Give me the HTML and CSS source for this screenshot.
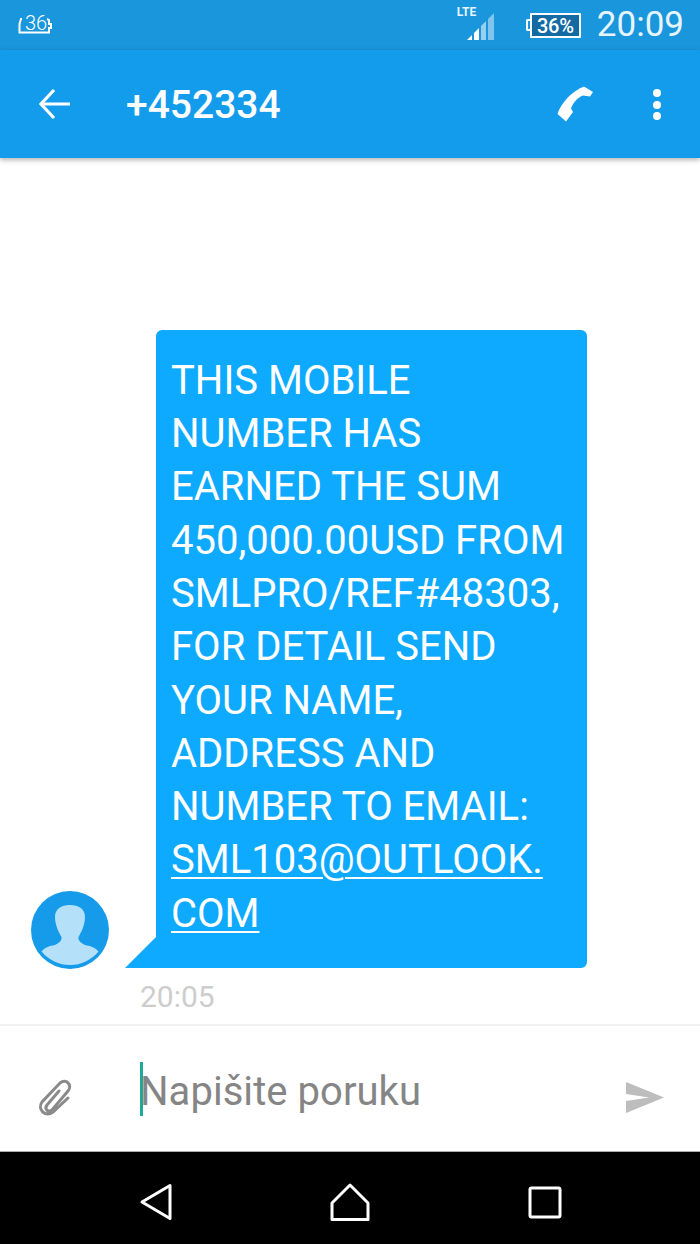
FILE: index.html
```html
<!DOCTYPE html>
<html lang="hr">
<head>
<meta charset="utf-8">
<title>+452334</title>
<link rel="stylesheet" href="styles.css">
</head>
<body>
<div class="status">
  <div class="status-left">
    <svg class="ic-sd" width="36" height="24" viewBox="0 0 36 24"><path d="M5 6H4L2.500 11V19.500H32V15H34V11H32V7L30 6" fill="none" stroke="#fff" stroke-width="2"/></svg>
    <span class="sd-num">36</span>
  </div>
  <div class="status-right">
    <div class="signal">
      <span class="lte">LTE</span>
      <svg width="30" height="30" viewBox="0 0 30 30"><path d="M1 29L6 24V29Z" fill="#fff"/><path d="M8 29V22L13 17V29Z" fill="#fff"/><path d="M15 29V15L20 10V29Z" fill="#fff" fill-opacity=".55"/><path d="M22 29V8L28 2V29Z" fill="#fff" fill-opacity=".45"/></svg>
    </div>
    <div class="batt"><span class="batt-cap"></span><span class="batt-body">36%</span></div>
    <span class="clock">20:09</span>
  </div>
</div>
<header class="appbar">
  <svg class="back" width="34" height="32" viewBox="0 0 34 32"><path d="M32 16H3M16 2L3 16L16 30" fill="none" stroke="#fff" stroke-width="3.2"/></svg>
  <h1 class="title">+452334</h1>
  <svg class="call" width="37" height="36" viewBox="0 0 37 36"><path d="M27 .5L36 6 33 10.500 26 9.500C21 11 16 17 14 22.500L16 26 9 35.500 .5 28C4 17 15 5 27 .5Z" fill="#fff"/></svg>
  <div class="more"><i></i><i></i><i></i></div>
</header>
<main class="chat">
  <div class="msg">
    <svg class="avatar" width="78" height="78" viewBox="0 0 78 78"><circle cx="39" cy="39" r="39" fill="#159bea"/><path d="M24 26C24 18 30 14 39 14 48 14 54 18 54 26 54 33 51 40 47.500 46 47 50 50 52 54 54 59 55 64 56 67.500 60.500A37 37 0 0 1 10.500 60.500C14 56 19 55 24 54 28 52 31 50 30.500 46 27 40 24 33 24 26Z" fill="#b5e0f9"/></svg>
    <div class="bubble">THIS MOBILE NUMBER HAS EARNED THE SUM 450,000.00USD FROM SMLPRO/REF#48303, FOR DETAIL SEND YOUR NAME, ADDRESS AND NUMBER TO EMAIL: <a class="link">SML103@OUTLOOK.<br>COM</a></div>
  </div>
  <time class="stamp">20:05</time>
</main>
<div class="composer">
  <svg class="clip" width="36" height="38" viewBox="0 0 36 38"><path d="M22 13L10 27C7 31 11 35 15 32L31 13C36 7 29 0 23 5L5 24C0 31 8 40 16 34L31 20" fill="none" stroke="#8a8a8a" stroke-width="3" stroke-linecap="round"/></svg>
  <div class="input"><span class="caret"></span><span class="placeholder">Napišite poruku</span></div>
  <svg class="send" width="40" height="32" viewBox="0 0 40 32"><path d="M1 1L39 16.500 1 32V20L24 16.500 1 13Z" fill="#bdbdbd"/></svg>
</div>
<nav class="navbar">
  <svg width="34" height="38" viewBox="0 0 34 38"><path d="M31 2.500V35.500L3 19Z" fill="none" stroke="#fff" stroke-width="3" stroke-linejoin="round"/></svg>
  <svg class="home" width="40" height="38" viewBox="0 0 40 38"><path d="M2 36.500V20L20 2 38 20V36.500Z" fill="none" stroke="#fff" stroke-width="3" stroke-linejoin="round"/></svg>
  <svg width="34" height="33" viewBox="0 0 34 33"><rect x="2" y="2" width="30" height="29" rx="1.500" fill="none" stroke="#fff" stroke-width="3"/></svg>
</nav>
</body>
</html>
```

FILE: styles.css
```css
* { box-sizing: border-box; }
html, body { margin: 0; padding: 0; }
body {
  width: 700px;
  height: 1244px;
  display: flex;
  flex-direction: column;
  overflow: hidden;
  background: #fff;
  font-family: Roboto, "Liberation Sans", sans-serif;
}
svg { display: block; flex: none; }

.status {
  height: 50px;
  flex: none;
  background: #1a96dc;
  display: flex;
  justify-content: space-between;
  align-items: center;
  color: #fff;
}
.status-left { position: relative; margin-left: 17px; }
.sd-num {
  position: absolute;
  left: 8px;
  top: 0;
  font-size: 20px;
  line-height: 20px;
  font-weight: 300;
}
.status-right { display: flex; align-items: center; margin-right: 16px; }
.signal { position: relative; width: 30px; height: 32px; margin-right: 30px; margin-top: 1px; }
.signal svg { position: absolute; right: 0; bottom: 1px; }
.lte {
  position: absolute;
  left: -9px;
  top: -4px;
  font-size: 12px;
  line-height: 12px;
  font-weight: 700;
  color: #e8f5fd;
}
.batt { display: flex; align-items: center; margin-right: 16px; }
.batt-cap { width: 4px; height: 12px; border: 2px solid #fff; border-right: 0; border-radius: 2px 0 0 2px; }
.batt-body {
  width: 51px;
  height: 25px;
  background: #146ba4;
  border: 2px solid #fff;
  border-radius: 1px;
  font-size: 20px;
  line-height: 22px;
  font-weight: 500;
  text-align: center;
  letter-spacing: -0.3px;
}
.clock { font-size: 35px; line-height: 40px; color: #e6f4fc; }

.appbar {
  height: 108px;
  flex: none;
  background: #149cec;
  display: flex;
  align-items: center;
  padding-left: 38px;
  box-shadow: 0 2px 5px rgba(0, 0, 0, .3);
  position: relative;
  color: #fff;
}
.title { margin: 2px 0 0 54px; font-size: 39px; line-height: 44px; font-weight: 500; flex: 1; }
.call { margin-right: 59px; margin-top: -1px; }
.more { display: flex; flex-direction: column; gap: 3.500px; width: 8px; margin-right: 39px; margin-top: 1px; }
.more i { width: 8px; height: 8px; border-radius: 50%; background: #fff; display: block; }

.chat {
  flex: 1;
  min-height: 0;
  display: flex;
  flex-direction: column;
  justify-content: flex-end;
  border-bottom: 2px solid #f2f2f2;
}
.msg { display: flex; align-items: flex-end; padding-left: 31px; }
.avatar { margin-bottom: -1px; }
.bubble {
  position: relative;
  width: 431px;
  margin-left: 47px;
  padding: 24px 15px 28px 15px;
  background: #0eaaff;
  color: #fff;
  border-radius: 6px 6px 6px 0;
  font-size: 40px;
  line-height: 53.3px;
}
.bubble::before {
  content: "";
  position: absolute;
  left: -31px;
  bottom: 0;
  border-style: solid;
  border-width: 0 0 31px 31px;
  border-color: transparent transparent #0eaaff transparent;
}
.link { color: #fff; text-decoration: underline; text-decoration-thickness: 2px; text-underline-offset: 4px; }
.stamp {
  display: block;
  margin: 12px 0 10px 140px;
  font-size: 30px;
  line-height: 34px;
  color: #cdcdcd;
}

.composer {
  height: 126px;
  flex: none;
  display: flex;
  align-items: center;
  padding-left: 37px;
  border-bottom: 1px solid #aaa;
}
.clip { margin-top: 17px; }
.input { flex: 1; display: flex; align-items: center; margin-left: 67px; position: relative; }
.caret { width: 3px; height: 54px; background: #1fa89b; flex: none; }
.placeholder { font-size: 40px; line-height: 54px; color: #858585; margin-top: 6px; margin-left: -3px; letter-spacing: 0.05px; }
.send { margin-right: 35px; margin-top: 16px; }

.navbar {
  height: 92px;
  flex: none;
  background: #000;
  display: flex;
  align-items: center;
  padding: 8px 138px 0 139px;
  justify-content: space-between;
}
.home { margin-left: -2px; }
```
